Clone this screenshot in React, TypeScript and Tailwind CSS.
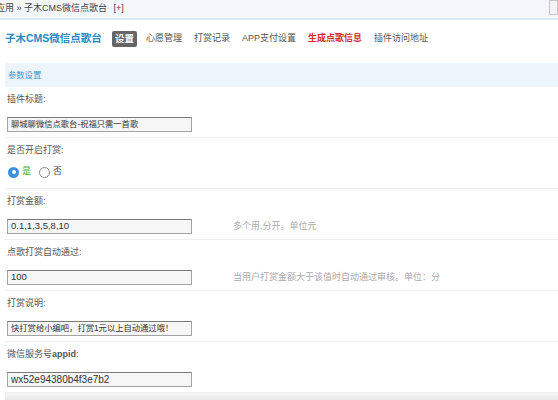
import React from "react";

const cjk = "font-['Liberation_Sans','Noto_Sans_CJK_SC',sans-serif]";

type Row = {
  label: React.ReactNode;
  value?: string;
  size?: string;
  hint?: string;
  radio?: boolean;
};

const rows: Row[] = [
  { label: "插件标题:", value: "聊城聊微信点歌台-祝福只需一首歌", size: "text-[8.3px]" },
  { label: "是否开启打赏:", radio: true },
  { label: "打赏金额:", value: "0.1,1,3,5,8,10", size: "text-[9.5px]", hint: "多个用,分开。单位元" },
  {
    label: "点歌打赏自动通过:",
    value: "100",
    size: "text-[9.5px]",
    hint: "当用户打赏金额大于该值时自动通过审核。单位：分",
  },
  { label: "打赏说明:", value: "快打赏给小编吧，打赏1元以上自动通过哦！", size: "text-[8.3px]" },
  {
    label: (
      <>
        微信服务号<span className="font-bold">appid</span>:
      </>
    ),
    value: "wx52e94380b4f3e7b2",
    size: "text-[10px]",
  },
];

const navItems = ["心愿管理", "打赏记录", "APP支付设置"];

const App = () => {
  return (
    <div className={`w-[558px] h-[400px] overflow-hidden bg-white ${cjk}`}>
      {/* breadcrumb bar */}
      <div className="relative h-[20px] bg-[#f3f7fc] border-b-2 border-[#dde9f2] flex items-center overflow-hidden">
        <span className="ml-[-4px] text-[9px] text-[#444] whitespace-nowrap">
          应用 » 子木CMS微信点歌台 <span className="ml-[4px]">[+]</span>
        </span>
        <div className="absolute right-0 top-0 w-[9px] h-[15px] border border-[#c8c8c8] bg-[#f4f4f4]" />
      </div>

      {/* nav */}
      <div className="mt-[10px] h-[18px] flex items-center pl-[5px]">
        <span className="text-[10.5px] font-bold text-[#2c89c2] w-[107px] whitespace-nowrap">
          子木CMS微信点歌台
        </span>
        <span className="h-[16px] px-[3px] rounded-[2px] bg-[#666] text-white text-[9.5px] font-bold flex items-center">
          设置
        </span>
        <div className="flex items-center gap-[12px] ml-[9px] text-[9px] text-[#555]">
          {navItems.map((n) => (
            <span key={n}>{n}</span>
          ))}
          <span className="text-[#d42b2b] font-bold">生成点歌信息</span>
          <span>插件访问地址</span>
        </div>
      </div>

      {/* section */}
      <div className="ml-[5px] mt-[15px]">
        <div className="h-[24px] bg-[#eef4fb] flex items-center pl-[3px] text-[8.3px] text-[#3f98cf]">
          参数设置
        </div>

        {rows.map((r, i) => (
          <div key={i} className="h-[51px] border-b border-[#eef0f3] pl-[2px] pt-[6px]">
            <div className="h-[14px] flex items-center text-[9px] text-[#555]">{r.label}</div>
            {r.radio ? (
              <div className="mt-[7px] h-[14px] flex items-center text-[9px]">
                <span className="w-[11px] h-[11px] ml-[1px] rounded-full bg-[#3d8fe0] flex items-center justify-center">
                  <span className="w-[4px] h-[4px] rounded-full bg-white" />
                </span>
                <span className="ml-[3px] text-[#3bb53b]">是</span>
                <span className="ml-[8px] w-[11px] h-[11px] rounded-full border border-[#888] bg-white" />
                <span className="ml-[3px] text-[#444]">否</span>
              </div>
            ) : (
              <div className="mt-[10px] h-[15px] flex items-center">
                <div
                  className={`w-[185px] h-[15px] border border-[#a3a3a3] border-t-[#7a7a7a] bg-[#f6f6f6] pl-[3px] flex items-center text-[#333] whitespace-nowrap ${r.size}`}
                >
                  {r.value}
                </div>
                {r.hint && (
                  <span className="ml-[41px] text-[9px] text-[#aaa] whitespace-nowrap">{r.hint}</span>
                )}
              </div>
            )}
          </div>
        ))}
        <div className="h-[8px] bg-gradient-to-b from-[#f4f4f4] to-[#e6e6e6]" />
      </div>
    </div>
  );
};

export default App;
